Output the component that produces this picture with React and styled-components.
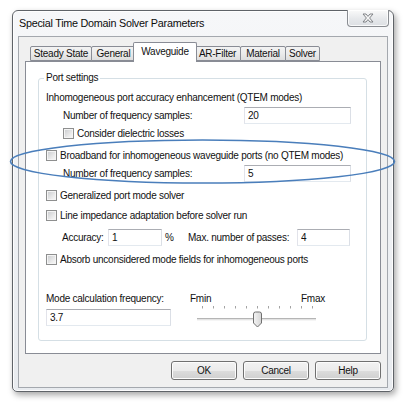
import React from "react";
import styled, { createGlobalStyle } from "styled-components";

const GlobalStyle = createGlobalStyle`
  html, body {
    margin: 0;
    padding: 0;
    background: #ffffff;
  }
  body {
    font-family: "Liberation Sans", Arial, sans-serif;
    font-size: 10px;
    letter-spacing: -0.25px;
    color: #111111;
  }
  * {
    box-sizing: border-box;
  }
`;

const Page = styled.div`
  position: relative;
  width: 405px;
  height: 413px;
  padding: 10px 0 0 12px;
`;

const Window = styled.div`
  width: 382px;
  height: 382px;
  border: 1px solid #5f6368;
  border-radius: 6px 6px 5px 5px;
  background: linear-gradient(#f6f7f9, #e8ebef);
  box-shadow: 2px 3px 6px rgba(0, 0, 0, 0.35),
    inset 0 0 0 1px rgba(255, 255, 255, 0.85);
  display: flex;
  flex-direction: column;
`;

const TitleBar = styled.div`
  height: 25px;
  display: flex;
  justify-content: space-between;
  align-items: flex-start;
  padding: 0 4px 0 6px;
`;

const TitleText = styled.span`
  line-height: 25px;
  font-size: 10.8px;
  color: #0c0c0c;
`;

const CloseButton = styled.div`
  width: 42px;
  height: 17px;
  margin-top: -1px;
  border: 1px solid #8a8d92;
  border-top: none;
  border-radius: 0 0 4px 4px;
  background: linear-gradient(#fafafa, #e6e8eb 55%, #dcdfe3);
  box-shadow: inset 0 0 0 1px rgba(255, 255, 255, 0.8);
  display: flex;
  align-items: center;
  justify-content: center;
`;

const Client = styled.div`
  flex: 1;
  margin: 0 5px 3px 5px;
  border: 1px solid #a4a8ae;
  background: #f0f0f0;
  display: flex;
  flex-direction: column;
`;

const TabArea = styled.div`
  margin: 5px 6px 0 6px;
  display: flex;
  flex-direction: column;
`;

const TabStrip = styled.div`
  position: relative;
  z-index: 1;
  height: 19px;
  display: flex;
  align-items: flex-end;
  padding-left: 5px;
`;

const Tab = styled.div`
  position: relative;
  z-index: ${({ $active }) => ($active ? 2 : 1)};
  width: ${({ $w }) => $w}px;
  margin-left: ${({ $ml }) => $ml}px;
  height: ${({ $active }) => ($active ? 20 : 15)}px;
  margin-bottom: ${({ $active }) => ($active ? -1 : 0)}px;
  padding-bottom: ${({ $active }) => ($active ? 3 : 0)}px;
  border: 1px solid #898c95;
  border-bottom: ${({ $active }) => ($active ? "none" : "1px solid #898c95")};
  border-radius: 2px 2px 0 0;
  background: ${({ $active }) =>
    $active ? "#ffffff" : "linear-gradient(#f3f3f3, #ebebeb 50%, #dedede)"};
  display: flex;
  align-items: center;
  justify-content: center;
  white-space: nowrap;
`;

const Panel = styled.div`
  height: 293px;
  border: 1px solid #898c95;
  background: #ffffff;
  display: flex;
  flex-direction: column;
`;

const Group = styled.fieldset`
  margin: 10px 13px 0 12px;
  padding: 0 15px 11px 7px;
  border: 1px solid #d5dfe5;
  border-radius: 3px;
  box-shadow: inset 0 0 0 1px #ffffff;
  min-width: 0;
`;

const Legend = styled.legend`
  margin-left: -2px;
  padding: 0 2px;
  line-height: 12px;
`;

const Row = styled.div`
  display: flex;
  align-items: center;
  height: ${({ $h }) => $h || 14}px;
  margin-top: ${({ $mt }) => $mt || 0}px;
  padding-left: ${({ $indent }) => $indent || 0}px;
  white-space: nowrap;
`;

const FieldLabel = styled.span`
  flex: 1;
`;

const TextBox = styled.input`
  width: ${({ $w }) => $w}px;
  height: 17px;
  margin: 0;
  padding: 0 0 0 3px;
  border: 1px solid;
  border-color: #abadb3 #dbdfe6 #e3e9ef #e2e3ea;
  background: #ffffff;
  font-family: "Liberation Sans", Arial, sans-serif;
  font-size: 10px;
  letter-spacing: -0.25px;
  color: #111111;
  outline: none;
`;

const Box = styled.span`
  width: 11px;
  height: 11px;
  margin-right: 3px;
  border: 1px solid #8e8f8f;
  background: linear-gradient(135deg, #c8cacd 0%, #eeeeee 70%, #f8f8f8 100%);
  box-shadow: inset 0 0 0 1px #f4f4f4;
  flex-shrink: 0;
`;

const AccuracyGrid = styled.div`
  display: grid;
  grid-template-columns: 46px 54px 26px 109px 53px;
  align-items: center;
  height: 18px;
  margin-top: 6px;
  padding-left: 16px;
  white-space: nowrap;
`;

const Percent = styled.span`
  padding-left: 3px;
`;

const BottomSection = styled.div`
  display: flex;
  margin-top: 25px;
`;

const LeftCol = styled.div`
  width: 125px;
  display: flex;
  flex-direction: column;
`;

const RightCol = styled.div`
  width: 135px;
  margin-left: 19px;
  display: flex;
  flex-direction: column;
`;

const Limits = styled.div`
  height: 14px;
  display: flex;
  align-items: center;
  justify-content: space-between;
`;

const ModeInput = styled(TextBox)`
  margin-top: 4px;
`;

const ButtonRow = styled.div`
  display: flex;
  justify-content: flex-end;
  gap: 6px;
  margin-top: 7px;
  padding-right: 6px;
`;

const Button = styled.div`
  width: 66px;
  height: 19px;
  border: 1px solid #707070;
  border-radius: 3px;
  background: linear-gradient(#f2f2f2 0%, #ebebeb 50%, #dddddd 51%, #cfcfcf 100%);
  box-shadow: inset 0 0 0 1px #fcfcfc;
  display: flex;
  align-items: center;
  justify-content: center;
`;

const Highlight = styled.svg`
  position: absolute;
  left: 0;
  top: 0;
  pointer-events: none;
`;

const tabs = [
  { label: "Steady State", w: 62, ml: 0 },
  { label: "General", w: 45, ml: -1 },
  { label: "Waveguide", w: 64, ml: -3, active: true },
  { label: "AR-Filter", w: 47, ml: -3 },
  { label: "Material", w: 46, ml: -1 },
  { label: "Solver", w: 35, ml: -1 },
];

const CloseGlyph = () => (
  <svg width="12" height="10" viewBox="0 0 12 10">
    <path
      d="M1 1 H4 L6 3.4 L8 1 H11 L7.6 5 L11 9 H8 L6 6.6 L4 9 H1 L4.4 5 Z"
      fill="#f6f6f6"
      stroke="#74777c"
      strokeWidth="0.9"
      strokeLinejoin="round"
    />
  </svg>
);

const Checkbox = ({ children, indent, mt }) => (
  <Row $indent={indent} $mt={mt}>
    <Box />
    <span>{children}</span>
  </Row>
);

const FieldRow = ({ label, value, mt }) => (
  <Row $h={18} $mt={mt} $indent={17}>
    <FieldLabel>{label}</FieldLabel>
    <TextBox $w={107} defaultValue={value} readOnly />
  </Row>
);

const Slider = ({ ticks, value }) => {
  const thumbX = 12.5 + 11 * value;
  return (
    <svg width="135" height="24" viewBox="0 0 135 24">
      {Array.from({ length: ticks }).map((_, i) => (
        <line
          key={i}
          x1={12.5 + 11 * i}
          x2={12.5 + 11 * i}
          y1="1"
          y2="3.5"
          stroke="#a3a3a3"
          strokeWidth="1"
        />
      ))}
      <rect x="7" y="13" width="119" height="1.5" fill="#b5b5b5" />
      <rect x="7" y="14.5" width="119" height="1" fill="#ececec" />
      <defs>
        <linearGradient id="thumb" x1="0" x2="1">
          <stop offset="0" stopColor="#f4f4f4" />
          <stop offset="1" stopColor="#d6d6d6" />
        </linearGradient>
      </defs>
      <path
        d={`M${thumbX - 4} 9 Q${thumbX - 4} 7 ${thumbX - 2} 7 H${thumbX + 2} Q${thumbX + 4} 7 ${thumbX + 4} 9 V18 L${thumbX} 22 L${thumbX - 4} 18 Z`}
        fill="url(#thumb)"
        stroke="#707070"
        strokeWidth="1"
      />
    </svg>
  );
};

const App = () => (
  <Page>
    <GlobalStyle />
    <Window>
      <TitleBar>
        <TitleText>Special Time Domain Solver Parameters</TitleText>
        <CloseButton>
          <CloseGlyph />
        </CloseButton>
      </TitleBar>
      <Client>
        <TabArea>
          <TabStrip>
            {tabs.map((t) => (
              <Tab key={t.label} $w={t.w} $ml={t.ml} $active={t.active}>
                {t.label}
              </Tab>
            ))}
          </TabStrip>
          <Panel>
            <Group>
              <Legend>Port settings</Legend>
              <Row $mt={6}>
                Inhomogeneous port accuracy enhancement (QTEM modes)
              </Row>
              <FieldRow label="Number of frequency samples:" value="20" mt={2} />
              <Checkbox indent={17} mt={2}>
                Consider dielectric losses
              </Checkbox>
              <Checkbox mt={8}>
                Broadband for inhomogeneous waveguide ports (no QTEM modes)
              </Checkbox>
              <FieldRow label="Number of frequency samples:" value="5" mt={2} />
              <Checkbox mt={6}>Generalized port mode solver</Checkbox>
              <Checkbox mt={6}>Line impedance adaptation before solver run</Checkbox>
              <AccuracyGrid>
                <span>Accuracy:</span>
                <TextBox $w={54} defaultValue="1" readOnly />
                <Percent>%</Percent>
                <span>Max. number of passes:</span>
                <TextBox $w={53} defaultValue="4" readOnly />
              </AccuracyGrid>
              <Checkbox mt={6}>
                Absorb unconsidered mode fields for inhomogeneous ports
              </Checkbox>
              <BottomSection>
                <LeftCol>
                  <Row>Mode calculation frequency:</Row>
                  <ModeInput $w={125} defaultValue="3.7" readOnly />
                </LeftCol>
                <RightCol>
                  <Limits>
                    <span>Fmin</span>
                    <span>Fmax</span>
                  </Limits>
                  <Slider ticks={11} value={5} />
                </RightCol>
              </BottomSection>
            </Group>
          </Panel>
        </TabArea>
        <ButtonRow>
          <Button>OK</Button>
          <Button>Cancel</Button>
          <Button>Help</Button>
        </ButtonRow>
      </Client>
    </Window>
    <Highlight width="405" height="413" viewBox="0 0 405 413">
      <ellipse
        cx="202.5"
        cy="161.5"
        rx="192"
        ry="21.5"
        fill="none"
        stroke="#4a7ebb"
        strokeWidth="1.6"
      />
    </Highlight>
  </Page>
);

export default App;
